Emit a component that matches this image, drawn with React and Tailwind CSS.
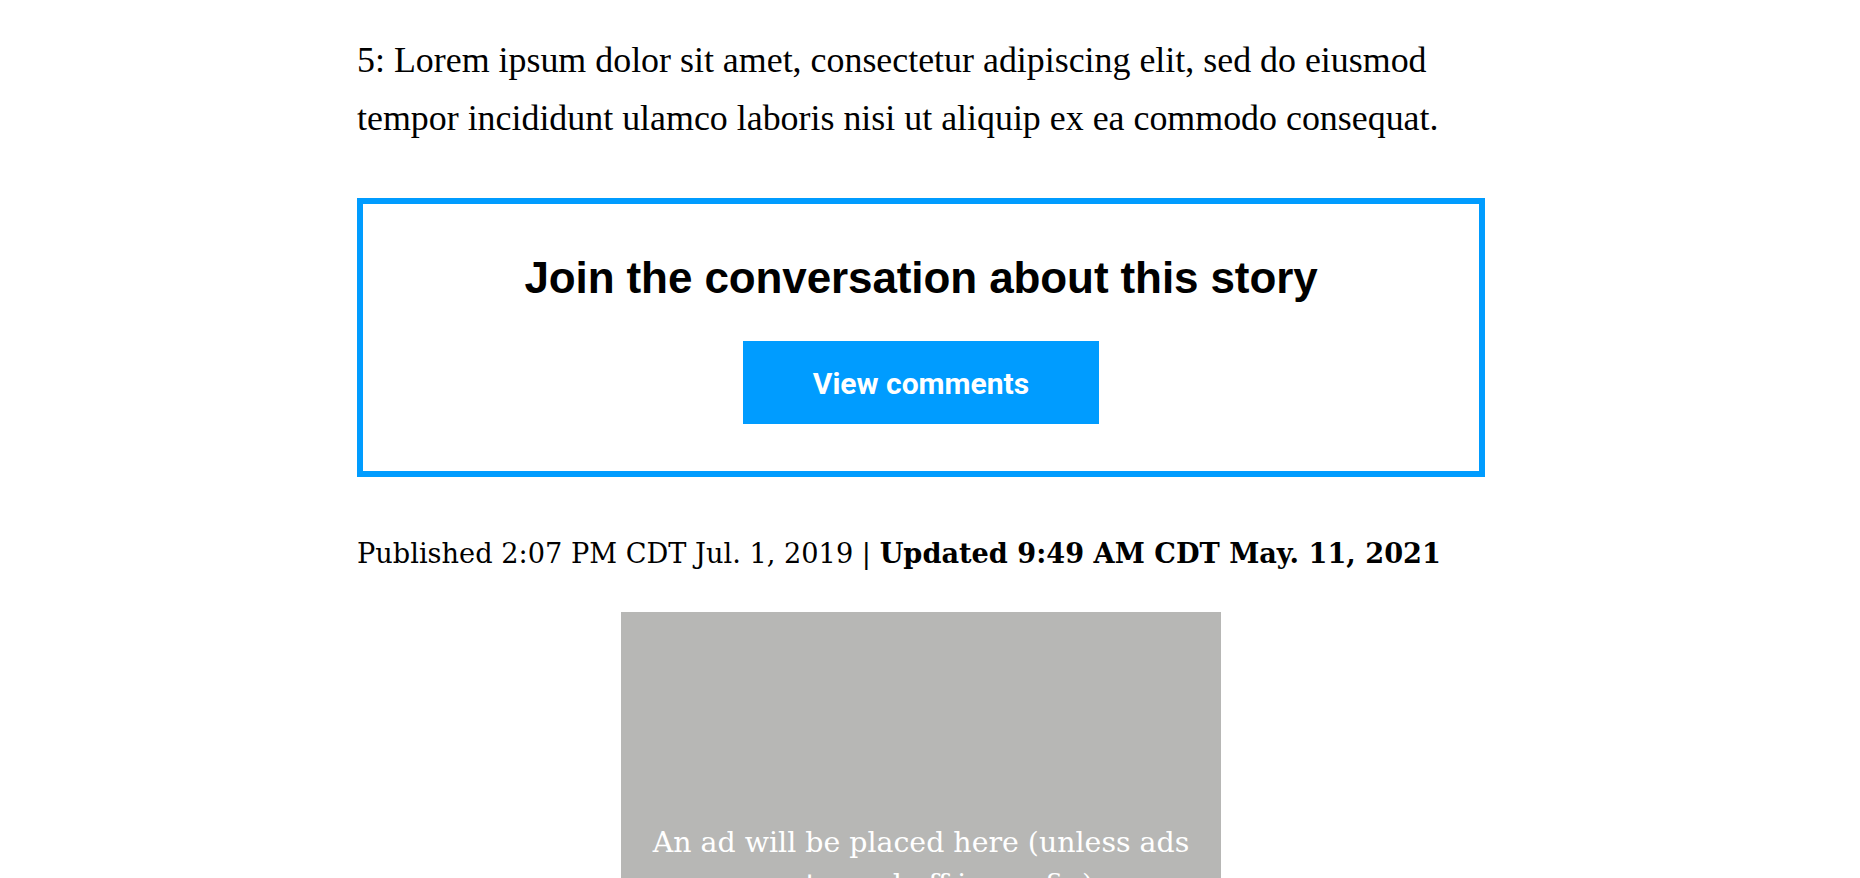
export default function App() {
    return (
        <div className="min-h-screen bg-white">
            <article className="ml-[357px] w-[1128px] pt-[32px] pb-10">
                <p className="font-['Liberation_Serif',serif] text-[35.9px] leading-[57.6px] text-black">
                    5: Lorem ipsum dolor sit amet, consectetur adipiscing elit, sed do eiusmod tempor incididunt ulamco laboris nisi ut aliquip ex ea commodo consequat.
                </p>

                <section className="mt-[51px] border-[6px] border-[#009cff] pt-[48px] pb-[47px] flex flex-col items-center">
                    <h2 className="font-['Liberation_Sans',Arial,sans-serif] font-bold text-[44px] leading-[52.8px] tracking-[-0.1px] text-black">
                        Join the conversation about this story
                    </h2>
                    <button className="mt-[36px] w-[356px] h-[83px] pt-[3px] bg-[#009cff] text-white font-['Roboto',sans-serif] font-bold text-[30px] cursor-pointer">
                        View comments
                    </button>
                </section>

                <p className="mt-[56px] font-['DejaVu_Serif',serif] text-[27.2px] leading-[40px] text-black">
                    Published 2:07 PM CDT Jul. 1, 2019 | <strong className="font-bold">Updated 9:49 AM CDT May. 11, 2021</strong>
                </p>

                <div className="mt-[38px] mx-auto w-[600px] h-[500px] bg-[#b7b7b5] flex items-center justify-center px-6">
                    <p className="pt-[4px] font-['DejaVu_Serif',serif] text-[28.4px] leading-[42px] text-white text-center">
                        An ad will be placed here (unless ads are turned off in config)
                    </p>
                </div>
            </article>
        </div>
    );
}
